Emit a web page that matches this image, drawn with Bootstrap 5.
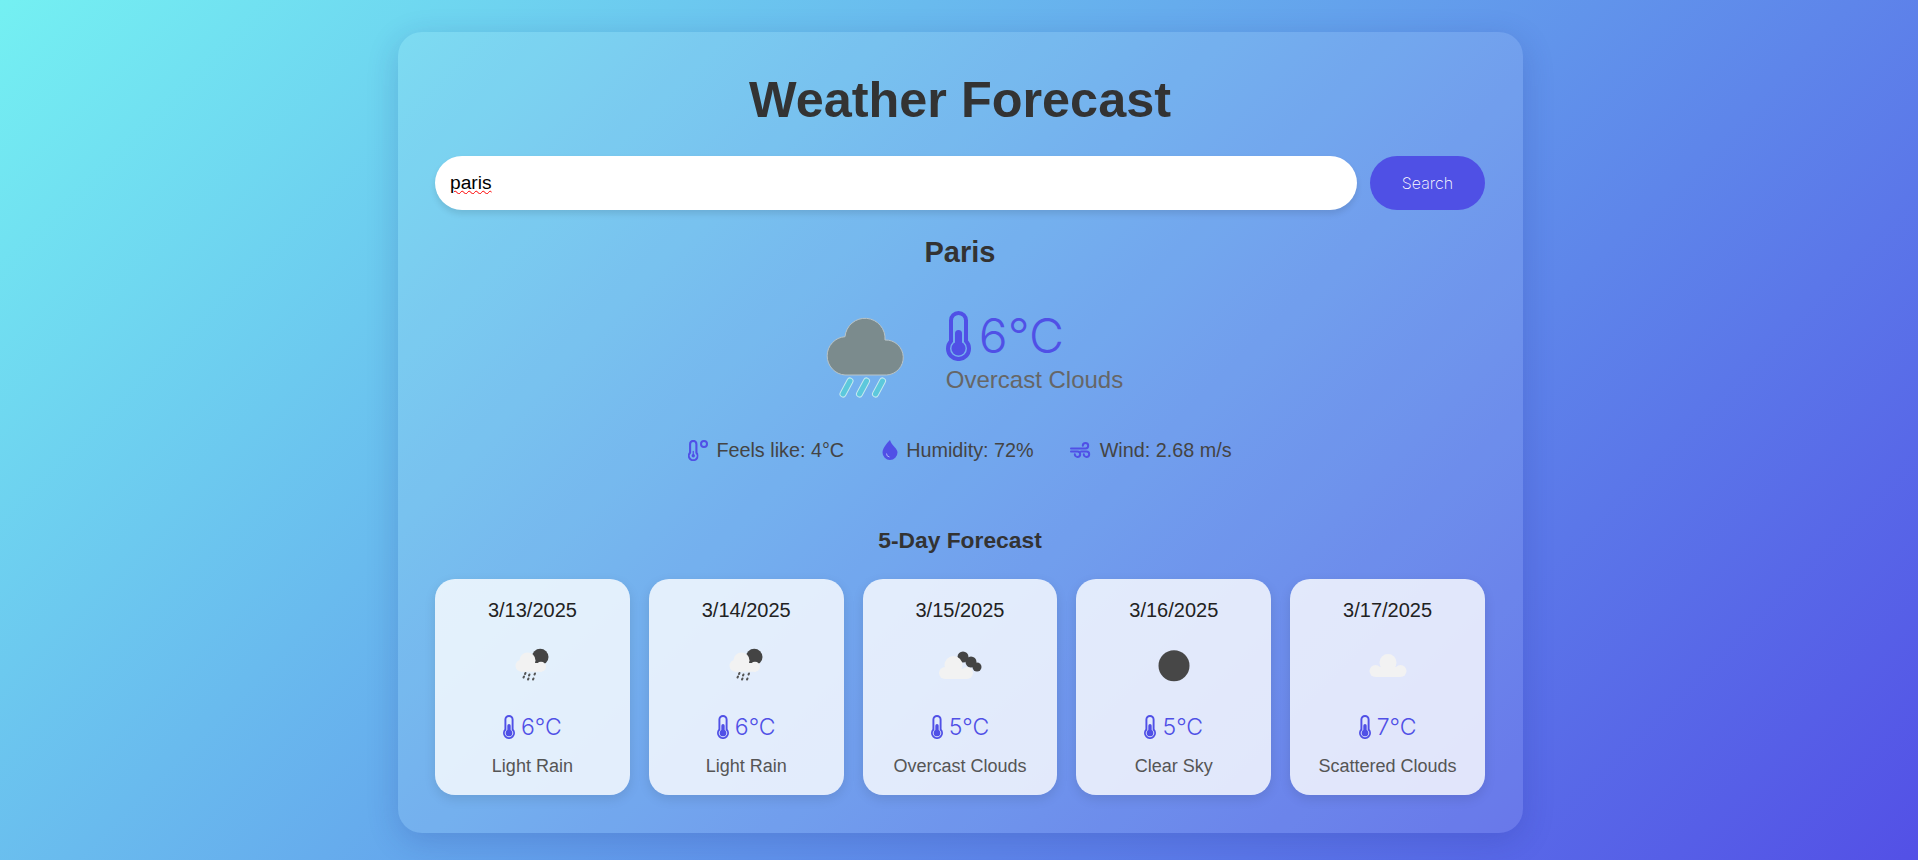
<!DOCTYPE html>
<html lang="en">
<head>
    <meta charset="UTF-8">
    <meta name="viewport" content="width=device-width, initial-scale=1.0">
    <title>Weather Forecast</title>
    <link href="https://cdn.jsdelivr.net/npm/bootstrap@5.3.3/dist/css/bootstrap.min.css" rel="stylesheet">
    <style>
        html, body { height: 100%; }
        body {
            background: linear-gradient(135deg, #74f0f2, #5350e6) no-repeat;
            font-family: "Liberation Sans", Arial, sans-serif;
            color: #333;
            overflow: hidden;
        }
        .page-wrap { padding: 32px 0 27px 3px; }
        .wx-shell {
            width: 1125px;
            height: 801px;
            padding: 38px 38px 37px 37px;
            border-radius: 24px;
            background: rgba(255, 255, 255, .1);
            box-shadow: 0 8px 32px rgba(31, 38, 135, .2);
        }
        .wx-title { font-size: 50.4px; font-weight: 700; line-height: 60px; color: #333; margin: 0 0 26px; text-align: center; }
        .wx-search { gap: 13px; }
        .wx-input {
            height: 54px;
            border: 0;
            border-radius: 27px;
            padding: 0 15px;
            font-family: "Liberation Sans", Arial, sans-serif;
            font-size: 19.2px;
            color: #000;
            box-shadow: 0 4px 6px rgba(0, 0, 0, .1);
            text-decoration: underline wavy #f00 1px;
        }
        .wx-input:focus { box-shadow: 0 4px 6px rgba(0, 0, 0, .1); color: #000; }
        .wx-btn {
            width: 115px;
            height: 54px;
            border: 0;
            border-radius: 27px;
            background: #4f50e5;
            color: #fff;
            font-family: Inter, sans-serif;
            font-weight: 200;
            font-size: 16px;
        }
        .wx-btn:hover { background: #4f50e5; color: #fff; }
        .wx-city { font-size: 29px; font-weight: 700; line-height: 34px; margin: 25px 0 0; text-align: center; }
        .wx-now { gap: 16px; margin-top: 31px; height: 110px; }
        .wx-big-icon { width: 133px; height: 110px; }
        .wx-now-text { margin-bottom: 6px; }
        .wx-temp { font-family: Inter, sans-serif; font-weight: 300; font-size: 48px; line-height: 50px; color: #5050e6; gap: 8px; }
        .wx-temp svg { width: 25px; height: 50px; }
        .wx-desc { font-size: 24px; line-height: 26px; color: #666; margin-top: 6px; }
        .wx-details { gap: 36px; margin-top: 28px; font-size: 19.8px; line-height: 24px; color: #444; }
        .wx-details svg { height: 24px; color: #5050e6; }
        .wx-ico-feels { width: 20px; }
        .wx-ico-drop { width: 20px; margin-right: 6px; }
        .wx-ico-wind { width: 22px; }
        .wx-sub { font-size: 22.8px; font-weight: 700; line-height: 28px; margin: 64px 0 25px; text-align: center; }
        .wx-days { gap: 19px; }
        .wx-day {
            flex: 1 1 0;
            height: 216px;
            padding: 19px 0 0;
            border-radius: 20px;
            background: rgba(255, 255, 255, .8);
            box-shadow: 0 4px 12px rgba(0, 0, 0, .1);
            text-align: center;
        }
        .wx-date { font-size: 20px; line-height: 24px; color: #222; }
        .wx-day-icon { display: block; width: 60px; height: 60px; margin: 13px auto 19px; }
        .wx-day-temp { font-family: Inter, sans-serif; font-weight: 300; font-size: 23px; line-height: 26px; color: #5050e6; gap: 6px; }
        .wx-day-temp svg { width: 12px; height: 24px; }
        .wx-day-desc { font-size: 18px; line-height: 22px; color: #555; margin-top: 15px; }
    </style>
</head>
<body>
    <svg width="0" height="0" class="position-absolute">
        <symbol id="thermo" viewBox="0 0 25 50">
            <path fill="none" stroke="currentColor" stroke-width="4" d="M5 9.500a7.500 7.500 0 0 1 15 0V30.200a10.500 10.500 0 1 1-15 0z"/>
            <circle cx="12.500" cy="37.500" r="7" fill="currentColor"/>
            <rect x="9" y="19" width="7" height="20" rx="3.500" fill="currentColor"/>
        </symbol>
        <symbol id="thermo-line" viewBox="0 0 25 50">
            <path fill="none" stroke="currentColor" stroke-width="5" d="M5 9.500a7.500 7.500 0 0 1 15 0V30.200a10.500 10.500 0 1 1-15 0z"/>
            <circle cx="12.500" cy="37.500" r="4" fill="currentColor"/>
            <rect x="11" y="26" width="3" height="10" fill="currentColor"/>
        </symbol>
        <symbol id="cloud-sun-rain" viewBox="0 0 60 60">
            <circle cx="38.200" cy="22" r="8.300" fill="#444"/>
            <g fill="#f2f2f2"><circle cx="25.500" cy="25.500" r="8"/><circle cx="19.500" cy="30.700" r="6"/><circle cx="39" cy="31.700" r="5"/><rect x="19" y="28" width="21" height="8.700"/></g>
            <path stroke="#555" stroke-width="2" stroke-linecap="round" d="M23.500 38l-.5 1M27.500 39.500l-.5 1M22 41.500l-.5 1M26.500 43.500l-.5 1M33 38.500l-.5 1M31.500 43.500l-.5 1"/>
        </symbol>
    </svg>

    <div class="page-wrap">
        <div class="wx-shell mx-auto">
            <h1 class="wx-title">Weather Forecast</h1>

            <div class="d-flex wx-search">
                <input type="text" class="form-control wx-input flex-grow-1" value="paris">
                <button class="btn wx-btn flex-shrink-0">Search</button>
            </div>

            <h2 class="wx-city">Paris</h2>

            <div class="d-flex justify-content-center align-items-center wx-now">
                <svg class="wx-big-icon" viewBox="-13 0 133 110">
                    <path fill="#7b8b8d" stroke="#b9c4c8" d="M35 75a19.200 19.200 0 0 1 0-38.300A20 20 0 0 1 75 40a17.500 17.500 0 0 1 1.500 35z"/>
                    <g fill="none" stroke-linecap="round">
                        <path stroke="#c5e9ef" stroke-width="7" d="M40 81l-7 13M56.500 81l-7 13M72.500 81l-7 13"/>
                        <path stroke="#5cc8dc" stroke-width="5" d="M40 81l-7 13M56.500 81l-7 13M72.500 81l-7 13"/>
                    </g>
                </svg>
                <div class="wx-now-text">
                    <div class="wx-temp d-flex align-items-center">
                        <svg><use href="#thermo"/></svg><span>6°C</span>
                    </div>
                    <div class="wx-desc">Overcast Clouds</div>
                </div>
            </div>

            <div class="d-flex justify-content-center wx-details">
                <div class="d-flex align-items-center gap-2">
                    <svg class="wx-ico-feels" viewBox="0 0 20 24">
                        <use href="#thermo-line" x="0" y="2" width="10.500" height="21"/>
                        <circle cx="16" cy="6" r="3" fill="none" stroke="currentColor" stroke-width="2"/>
                    </svg>
                    <span>Feels like: 4°C</span>
                </div>
                <div class="d-flex align-items-center">
                    <svg class="wx-ico-drop" viewBox="0 0 20 24">
                        <path fill="currentColor" transform="translate(0 2) scale(1.250)" d="M8 16a6 6 0 0 0 6-6c0-1.655-1.122-2.904-2.432-4.362C10.254 4.176 8.750 2.503 8 0c0 0-6 5.686-6 10a6 6 0 0 0 6 6z"/>
                        <path fill="none" stroke="#a9b4f5" d="M6.500 15.500a3.500 3.500 0 0 0 3 3.500"/>
                    </svg>
                    <span>Humidity: 72%</span>
                </div>
                <div class="d-flex align-items-center gap-2">
                    <svg class="wx-ico-wind" viewBox="0 0 22 24">
                        <g fill="none" stroke="currentColor" stroke-width="2" stroke-linecap="round">
                            <path d="M1 10.500h14.500a2.700 2.700 0 1 0-2.700-2.700"/>
                            <path d="M1 13.500h6.500a2.700 2.700 0 1 1-2.700 2.700"/>
                            <path d="M11 13.500h5.500a2.700 2.700 0 1 1-2.700 2.700"/>
                        </g>
                    </svg>
                    <span>Wind: 2.68 m/s</span>
                </div>
            </div>

            <h3 class="wx-sub">5-Day Forecast</h3>

            <div class="d-flex wx-days">
                <div class="wx-day">
                    <div class="wx-date">3/13/2025</div>
                    <svg class="wx-day-icon"><use href="#cloud-sun-rain"/></svg>
                    <div class="wx-day-temp d-flex justify-content-center align-items-center"><svg><use href="#thermo"/></svg><span>6°C</span></div>
                    <div class="wx-day-desc">Light Rain</div>
                </div>
                <div class="wx-day">
                    <div class="wx-date">3/14/2025</div>
                    <svg class="wx-day-icon"><use href="#cloud-sun-rain"/></svg>
                    <div class="wx-day-temp d-flex justify-content-center align-items-center"><svg><use href="#thermo"/></svg><span>6°C</span></div>
                    <div class="wx-day-desc">Light Rain</div>
                </div>
                <div class="wx-day">
                    <div class="wx-date">3/15/2025</div>
                    <svg class="wx-day-icon" viewBox="10 -5 60 60">
                        <g fill="#444"><circle cx="43" cy="17" r="5.500"/><circle cx="51" cy="22" r="5.500"/><circle cx="57" cy="27" r="4.500"/></g>
                        <g fill="#f2f2f2"><circle cx="33.500" cy="25" r="9"/><circle cx="25" cy="33" r="6"/><circle cx="47" cy="33" r="6"/><rect x="25" y="29" width="22" height="10"/></g>
                    </svg>
                    <div class="wx-day-temp d-flex justify-content-center align-items-center"><svg><use href="#thermo"/></svg><span>5°C</span></div>
                    <div class="wx-day-desc">Overcast Clouds</div>
                </div>
                <div class="wx-day">
                    <div class="wx-date">3/16/2025</div>
                    <svg class="wx-day-icon" viewBox="0 0 60 60">
                        <circle cx="30" cy="30.700" r="15.500" fill="#474747"/>
                    </svg>
                    <div class="wx-day-temp d-flex justify-content-center align-items-center"><svg><use href="#thermo"/></svg><span>5°C</span></div>
                    <div class="wx-day-desc">Clear Sky</div>
                </div>
                <div class="wx-day">
                    <div class="wx-date">3/17/2025</div>
                    <svg class="wx-day-icon" viewBox="0 0 60 60">
                        <g fill="#f2f2f2"><circle cx="30" cy="27.500" r="8.500"/><circle cx="17.500" cy="36" r="6"/><circle cx="42.500" cy="36" r="6"/><rect x="17.500" y="32" width="25" height="10"/></g>
                    </svg>
                    <div class="wx-day-temp d-flex justify-content-center align-items-center"><svg><use href="#thermo"/></svg><span>7°C</span></div>
                    <div class="wx-day-desc">Scattered Clouds</div>
                </div>
            </div>
        </div>
    </div>

    <script src="https://cdn.jsdelivr.net/npm/bootstrap@5.3.3/dist/js/bootstrap.bundle.min.js"></script>
</body>
</html>
